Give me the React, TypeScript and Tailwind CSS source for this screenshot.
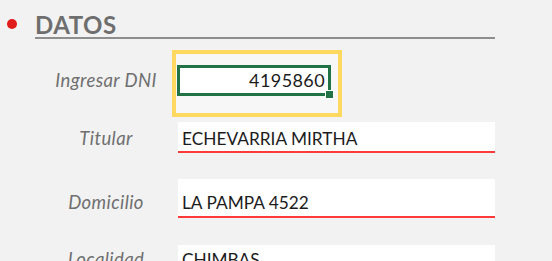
import React from 'react';

const fieldRows = [
  { label: 'Titular', value: 'ECHEVARRIA MIRTHA', gap: 'mt-[5px]', box: 'h-[31px] pb-[4px]' },
  { label: 'Domicilio', value: 'LA PAMPA 4522', gap: 'mt-[26px]', box: 'h-[39px] pb-[5px]' },
  { label: 'Localidad', value: 'CHIMBAS', gap: 'mt-[27px]', box: 'h-[30px] pb-[5px]' },
];

export default function App() {
  return (
    <div className="h-[261px] w-[552px] overflow-hidden bg-[#f2f2f2] font-['Lato','Open_Sans',sans-serif]">
      {/* encabezado */}
      <div className="flex h-[39px] items-end pl-[7px]">
        <span className="mb-[10px] h-[10px] w-[10px] rounded-full bg-[#e11c1c]" />
        <div className="ml-[18px] w-[460px] border-b-2 border-[#8e8e8e] text-[24px] font-bold leading-none tracking-[0.5px] text-[#6e6e6e]">
          DATOS
        </div>
      </div>

      {/* DNI */}
      <div className="mt-[11px] flex items-baseline">
        <div className="ml-[55px] w-[102px] text-center text-[18.5px] italic leading-none tracking-[0.4px] text-[#6f6f70]">
          Ingresar DNI
        </div>
        <div className="ml-[15px] h-[67px] w-[170px] border-4 border-[#ffd85f] bg-[#f7f7f7] pl-[1px] pt-[11px]">
          <div className="relative flex h-[31px] w-[154px] items-end justify-end border-[3px] border-[#217346] bg-white pb-[4px] pr-[3px] text-[18px] leading-none tracking-[0.4px] text-[#1c1c1c]">
            4195860
            <span className="absolute bottom-[-6px] right-[-6px] h-[9px] w-[9px] border border-white bg-[#217346]" />
          </div>
        </div>
      </div>

      {fieldRows.map((r) => (
        <div key={r.label} className={`flex items-baseline ${r.gap}`}>
          <div className="ml-[55px] w-[102px] text-center text-[18.5px] italic leading-none tracking-[0.4px] text-[#6f6f70]">
            {r.label}
          </div>
          <div
            className={`ml-[21px] flex w-[317px] items-end border-b-2 border-[#ff3a3a] bg-white pl-[4px] text-[17.3px] leading-none text-[#1c1c1c] ${r.box}`}
          >
            {r.value}
          </div>
        </div>
      ))}
    </div>
  );
}
